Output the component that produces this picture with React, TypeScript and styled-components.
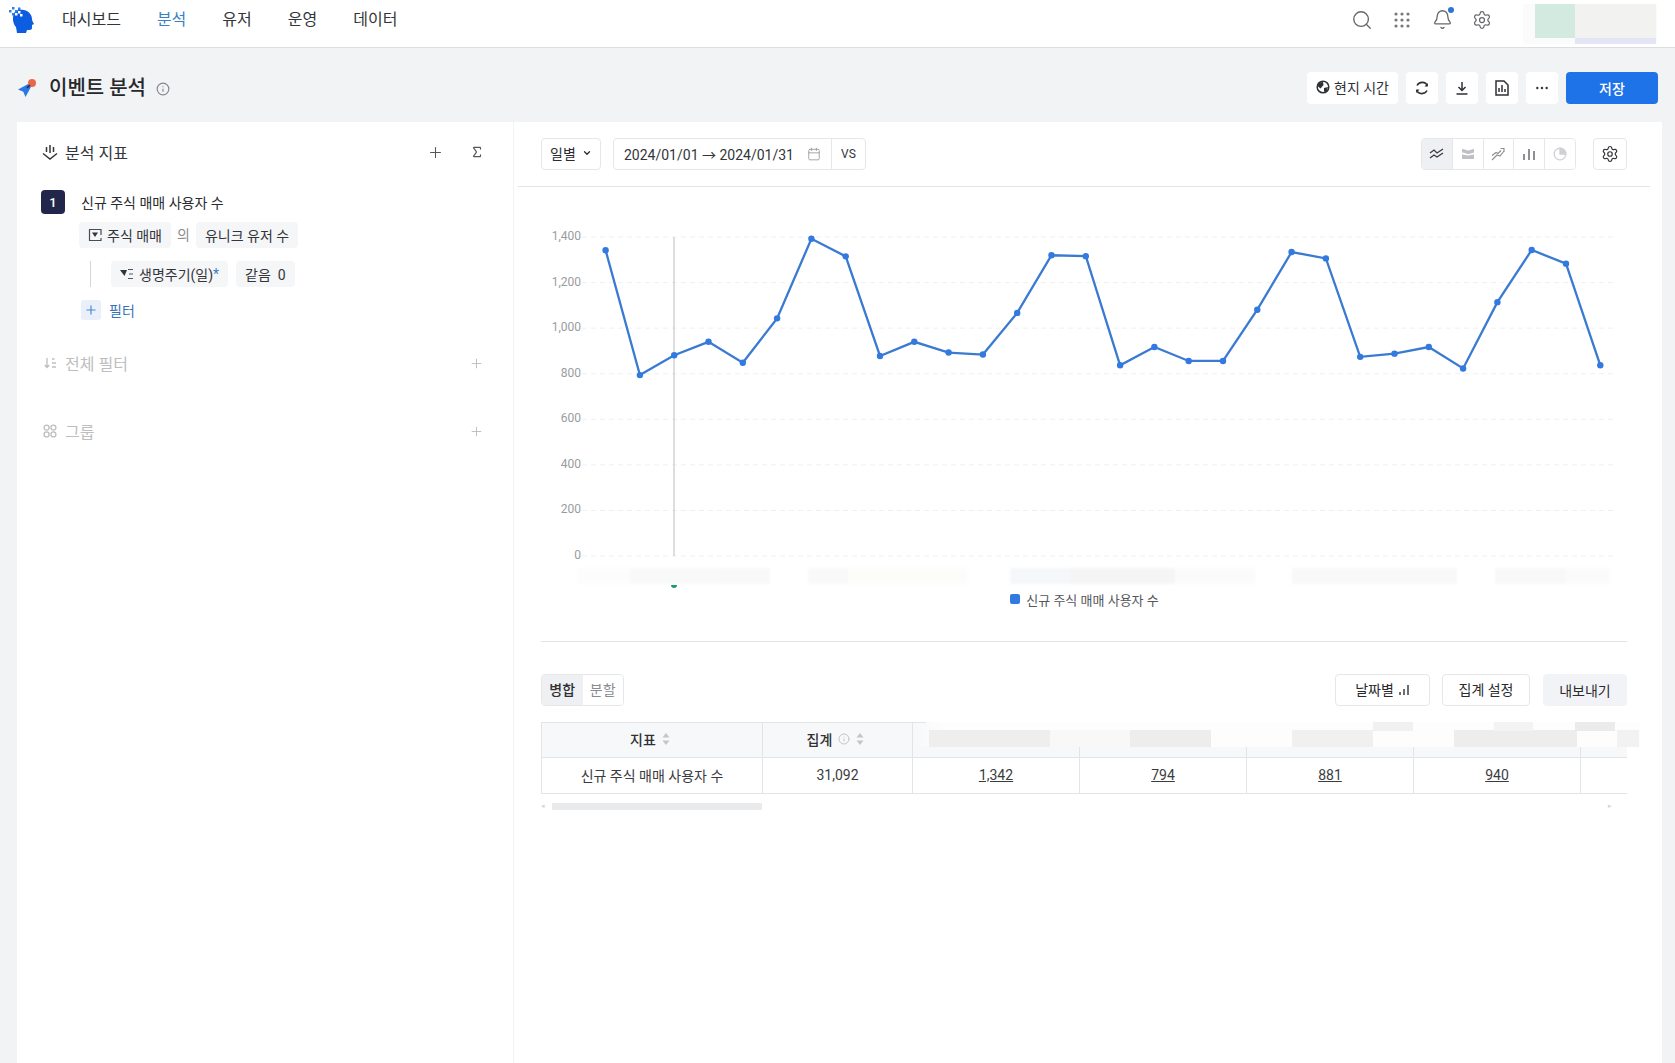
import { Fragment } from 'react'
import styled, { createGlobalStyle } from 'styled-components'
import { Bell, Calendar, ChevronDown, Ellipsis, Info, Plus, Search, Settings, Sigma } from 'lucide-react'

const GlobalStyle = createGlobalStyle`
  * {
    box-sizing: border-box;
  }

  html,
  body {
    margin: 0;
    padding: 0;
    background: #f2f3f5;
  }

  body {
    font-family: Roboto, 'Noto Sans CJK KR', sans-serif;
    font-size: 14px;
    color: #2a2b2f;
  }
`

const Page = styled.div`
  display: flex;
  flex-direction: column;
  height: 1063px;
  overflow: hidden;
`

const TopBar = styled.header`
  display: flex;
  align-items: center;
  height: 48px;
  padding: 0 18px 8px 8px;
  background: #fff;
  border-bottom: 1px solid #dddee1;
`

const Nav = styled.nav`
  display: flex;
  gap: 36px;
  margin-left: 28px;
  flex: 1;
`

const NavItem = styled.span<{ $active?: boolean }>`
  font-size: 16px;
  line-height: 22px;
  color: ${({ $active }) => ($active ? '#3a7fc4' : '#333539')};
`

const TopIcons = styled.div`
  display: flex;
  align-items: center;
  gap: 18px;
  margin-right: 30px;
  color: #66686d;
`

const TopIcon = styled.span`
  position: relative;
  display: flex;
  align-items: center;
  justify-content: center;
  width: 22px;
  height: 22px;
`

const BellDot = styled.i`
  position: absolute;
  top: -2px;
  right: -1px;
  width: 6px;
  height: 6px;
  border-radius: 50%;
  background: #2c74d6;
`

const Avatar = styled.div`
  display: grid;
  grid-template-columns: 12px 40px 81px;
  grid-template-rows: 34px 6px;
  width: 134px;
  height: 40px;
  margin-top: 8px;
  background: #fbfbfb;
`

const AvatarPart = styled.span<{ $bg: string; $row?: number; $col: number }>`
  background: ${({ $bg }) => $bg};
  grid-column: ${({ $col }) => $col};
  grid-row: ${({ $row }) => $row ?? 1};
`

const TitleRow = styled.div`
  display: flex;
  align-items: center;
  height: 74px;
  padding: 6px 17px 0 18px;
`

const PageTitle = styled.h1`
  margin: 0 0 0 13px;
  font-size: 20px;
  font-weight: 500;
  line-height: 28px;
  color: #26282c;
`

const TitleInfo = styled.span`
  display: flex;
  margin: 0 0 -1px 10px;
  color: #85878c;
  flex: 1;
`

const HeadActions = styled.div`
  display: flex;
  gap: 8px;
`

const HeadButton = styled.button<{ $wide?: boolean }>`
  display: flex;
  align-items: center;
  justify-content: center;
  gap: 4px;
  width: ${({ $wide }) => ($wide ? '91px' : '32px')};
  height: 32px;
  padding: 0 0 ${({ $wide }) => ($wide ? '3px' : '0')};
  border: 0;
  border-radius: 4px;
  background: #fff;
  font: inherit;
  color: #2f3135;
`

const SaveButton = styled(HeadButton)`
  width: 92px;
  background: #1f73e8;
  color: #fff;
  font-weight: 500;
`

const Body = styled.main`
  display: flex;
  gap: 1px;
  flex: 1;
  margin: 0 13px 0 17px;
  min-height: 0;
`

const SidePanel = styled.aside`
  width: 496px;
  padding: 19px 29px 0 24px;
  background: #fff;
`

const SideHead = styled.div<{ $muted?: boolean; $top?: number }>`
  display: flex;
  align-items: center;
  height: 22px;
  margin-top: ${({ $top }) => $top ?? 0}px;
  font-size: 16px;
  color: ${({ $muted }) => ($muted ? '#bdbec1' : '#34363a')};
`

const SideTitle = styled.span`
  margin-left: 7px;
  flex: 1;
`

const SideIcon = styled.span`
  display: flex;
  width: 17px;
  justify-content: center;
`

const HeadTools = styled.div`
  display: flex;
  align-items: center;
  gap: 26px;
  color: #55575b;
`

const MetricRow = styled.div`
  display: flex;
  align-items: center;
  gap: 16px;
  margin-top: 27px;
`

const Badge = styled.span`
  display: flex;
  align-items: center;
  justify-content: center;
  width: 24px;
  height: 24px;
  border-radius: 4px;
  background: #22264a;
  color: #fff;
  font-size: 13px;
  font-weight: 500;
`

const ChipRow = styled.div<{ $left: number; $top: number }>`
  display: flex;
  align-items: center;
  height: 26px;
  margin: ${({ $top }) => $top}px 0 0 ${({ $left }) => $left}px;
`

const Chip = styled.span<{ $gap?: number }>`
  display: flex;
  align-items: center;
  gap: 5px;
  height: 26px;
  padding: 0 9px;
  margin-right: ${({ $gap }) => $gap ?? 0}px;
  border-radius: 4px;
  background: #f5f6f8;
  color: #33353a;
  white-space: pre;
`

const Of = styled.span`
  margin: -2px 6px 0;
  color: #8a8c90;
`

const FilterLine = styled.span`
  width: 1px;
  height: 26px;
  margin-right: 20px;
  background: #d3d4d7;
`

const Star = styled.em`
  color: #3a7fc4;
  font-style: normal;
  margin-left: -5px;
`

const AddFilter = styled.div`
  display: flex;
  align-items: center;
  gap: 8px;
  margin: 13px 0 0 40px;
  color: #3a73b5;
`

const AddBox = styled.span`
  display: flex;
  align-items: center;
  justify-content: center;
  width: 20px;
  height: 20px;
  border-radius: 3px;
  background: #e9f0fa;
  color: #4a86d6;
`

const FirstMuted = styled(SideHead)`
  margin-top: 32px;
`

const MainPanel = styled.section`
  flex: 1;
  min-width: 0;
  background: #fff;
`

const Toolbar = styled.div`
  display: flex;
  align-items: center;
  height: 65px;
  margin-left: 4px;
  margin-right: 12px;
  padding: 0 23px;
  border-bottom: 1px solid #e3e4e6;
`

const Bordered = styled.div`
  display: flex;
  align-items: center;
  height: 32px;
  border: 1px solid #e6e7e9;
  border-radius: 4px;
  background: #fff;
`

const PeriodSelect = styled(Bordered)`
  width: 60px;
  padding: 0 0 2px 8px;
  gap: 6px;
  margin-right: 12px;
`

const DateField = styled(Bordered)`
  width: 253px;
  padding-left: 10px;
  color: #33353a;
`

const DateText = styled.span`
  width: 183px;
  white-space: nowrap;
`

const CalendarSlot = styled.span`
  display: flex;
  width: 24px;
  color: #8b8d91;
`

const Versus = styled.span`
  display: flex;
  align-items: center;
  justify-content: center;
  flex: 1;
  height: 100%;
  border-left: 1px solid #e6e7e9;
  font-size: 12px;
`

const Spacer = styled.div`
  flex: 1;
`

const ChartTypes = styled(Bordered)`
  width: 155px;
  margin-right: 17px;
  overflow: hidden;
`

const ChartType = styled.span<{ $active?: boolean }>`
  display: flex;
  align-items: center;
  justify-content: center;
  flex: 1;
  height: 100%;
  background: ${({ $active }) => ($active ? '#eef0f3' : '#fff')};
  border-left: 1px solid #e6e7e9;

  &:first-child {
    border-left: 0;
  }
`

const GearButton = styled(Bordered)`
  justify-content: center;
  width: 34px;
`

const ChartSvg = styled.svg`
  display: block;
  width: 1148px;
  height: 401px;
`

const AxisLabel = styled.text`
  font-size: 12px;
  fill: #9a9b9f;
  text-anchor: end;
`

const BlurGroup = styled.g`
  filter: blur(1.5px);
`

const Legend = styled.div`
  display: flex;
  align-items: center;
  justify-content: center;
  gap: 6px;
  height: 22px;
  padding-right: 7px;
  font-size: 13px;
  color: #55575b;
`

const LegendMark = styled.i`
  width: 10px;
  height: 10px;
  border-radius: 2px;
  background: #3279e0;
`

const Rule = styled.hr`
  margin: 31px 35px 0 27px;
  border: 0;
  border-top: 1px solid #e3e4e6;
`

const TableSection = styled.div`
  padding: 32px 35px 0 27px;
`

const TableBar = styled.div`
  display: flex;
  align-items: center;
  gap: 12px;
`

const ViewTabs = styled(Bordered)`
  width: 83px;
  overflow: hidden;
`

const ViewTab = styled.span<{ $active?: boolean }>`
  display: flex;
  align-items: center;
  justify-content: center;
  flex: 1;
  height: 100%;
  padding-bottom: 2px;
  background: ${({ $active }) => ($active ? '#eef0f3' : '#fff')};
  color: ${({ $active }) => ($active ? '#2f3135' : '#8a8c90')};
  font-weight: ${({ $active }) => ($active ? 500 : 400)};
`

const OutlineButton = styled(Bordered)<{ $w: number }>`
  justify-content: center;
  gap: 5px;
  width: ${({ $w }) => $w}px;
  padding-bottom: 2px;
`

const ExportButton = styled(OutlineButton)`
  margin-left: 1px;
  padding-bottom: 0;
  border-color: #f2f3f6;
  background: #f2f3f6;
`

const TableArea = styled.div`
  position: relative;
  margin-top: 16px;
`

const TableWrap = styled.div`
  width: 1086px;
  overflow: hidden;
`

const DataTable = styled.table`
  table-layout: fixed;
  border-collapse: collapse;
  width: 1156px;
`

const HeadCell = styled.th<{ $w: number }>`
  width: ${({ $w }) => $w}px;
  height: 35px;
  padding: 0 4px 2px 0;
  border: 1px solid #e3e4e6;
  background: #f7f8fa;
  font-weight: 500;
  color: #2f3135;
`

const DateHeadCell = styled(HeadCell)`
  border-top-color: transparent;
`

const HeadInner = styled.span`
  display: inline-flex;
  align-items: center;
  gap: 6px;
`

const Sorter = styled.svg`
  display: block;
`

const Cell = styled.td`
  height: 36px;
  padding: 0 0 2px;
  border: 1px solid #e3e4e6;
  text-align: center;
  color: #3a3c40;
`

const LinkValue = styled.span`
  text-decoration: underline;
`

const BlurBand = styled.div`
  position: absolute;
  top: 0;
  left: 372px;
  width: 727px;
  height: 25px;
  background: linear-gradient(90deg, #f7f8fa, #fdfdfd 30px);
`

const BlurPatch = styled.i<{ $x: number; $y: number; $w: number; $h: number; $c: string }>`
  position: absolute;
  left: ${({ $x }) => $x}px;
  top: ${({ $y }) => $y}px;
  width: ${({ $w }) => $w}px;
  height: ${({ $h }) => $h}px;
  background: ${({ $c }) => $c};
`

const ScrollTrack = styled.div`
  display: flex;
  align-items: center;
  height: 7px;
  margin-top: 9px;
  width: 1086px;
`

const ScrollThumb = styled.div`
  width: 210px;
  height: 7px;
  margin-left: 7px;
  background: #e9eaec;
`

const ScrollArrow = styled.span`
  font-size: 7px;
  line-height: 7px;
  color: #d5d6d8;
`

const ScrollEnd = styled(ScrollArrow)`
  margin-left: auto;
  margin-right: 15px;
`

// 차트 좌표는 페이지 좌표 기준
const VALUES = [
  1342, 794, 881, 940, 848, 1043, 1392, 1315, 878, 940, 893, 884, 1067, 1320, 1316, 837, 917, 856, 856, 1081, 1334,
  1306, 874, 888, 917, 823, 1114, 1343, 1283, 837,
]
const Y_TICKS = [0, 200, 400, 600, 800, 1000, 1200, 1400]
const X_START = 605.6
const X_STEP = 34.3
const yOf = (value: number) => 556 - (value * 319) / 1400
const LINE_POINTS = VALUES.map((v, i) => `${X_START + i * X_STEP},${yOf(v)}`).join(' ')

const AXIS_BLUR = [
  { x: 578, w: 100, c: '#fcfcfc' },
  { x: 630, w: 100, c: '#f9f9fa' },
  { x: 720, w: 50, c: '#f8f8f9' },
  { x: 808, w: 40, c: '#f9f9fa' },
  { x: 848, w: 120, c: '#fcfcfa' },
  { x: 1010, w: 60, c: '#f6f7fb' },
  { x: 1070, w: 105, c: '#f5f5f6' },
  { x: 1175, w: 80, c: '#fbfbfc' },
  { x: 1292, w: 165, c: '#f8f8f9' },
  { x: 1495, w: 70, c: '#f8f8f9' },
  { x: 1565, w: 45, c: '#fbfbfb' },
]

const HEAD_BLUR = [
  { x: 0, y: 0, w: 13, h: 1, c: '#e3e4e6' },
  { x: 16, y: 8, w: 121, h: 17, c: '#eeeeef' },
  { x: 137, y: 8, w: 80, h: 17, c: '#f8f8f9' },
  { x: 217, y: 8, w: 81, h: 17, c: '#ededee' },
  { x: 379, y: 8, w: 81, h: 17, c: '#f0f0f1' },
  { x: 460, y: 0, w: 40, h: 9, c: '#f1f1f2' },
  { x: 541, y: 8, w: 123, h: 17, c: '#ededee' },
  { x: 581, y: 0, w: 39, h: 9, c: '#f3f3f4' },
  { x: 662, y: 0, w: 40, h: 9, c: '#ebebec' },
  { x: 704, y: 8, w: 22, h: 17, c: '#f2f2f3' },
]

const DAY_VALUES = ['1,342', '794', '881', '940', '']

const SortIcon = () => (
  <Sorter width="8" height="14" viewBox="0 0 8 14" fill="#c4c5c8">
    <path d="M4 1 7.500 5.500H.5zM4 13 .5 8.500h7z" />
  </Sorter>
)

const Logo = () => (
  <svg width="26" height="27" viewBox="0 0 26 27" fill="#0d5de0">
    <path d="M6 7c2-3 6-4 10-3 5 1 8 5 8 9 0 2 1 3 2 5l-2 1v3c0 2-2 2-5 2l-1 3h-9l-1-6c-3-3-4-9-2-14z" />
    <g fill="#2f7fe8">
      <rect x="1" y="4" width="2.500" height="2.500" />
      <rect x="4" y="1" width="2.500" height="2.500" />
      <rect x="4" y="7" width="2.500" height="2.500" />
      <rect x="7" y="4" width="2.500" height="2.500" />
      <rect x="10" y="1.500" width="2.500" height="2.500" />
    </g>
    <g fill="#fff">
      <rect x="7" y="7" width="2.500" height="2.500" />
      <rect x="10" y="5" width="2.500" height="2.500" />
      <rect x="12" y="8" width="2.500" height="2.500" />
    </g>
  </svg>
)

const GridDots = () => (
  <svg width="18" height="18" viewBox="0 0 18 18" fill="#77797d">
    {[3, 9, 15].flatMap((cy) =>
      [3, 9, 15].map((cx) => <circle key={`${cx}-${cy}`} cx={cx} cy={cy} r="1.600" />)
    )}
  </svg>
)

const TitleIcon = () => (
  <svg width="18" height="18" viewBox="0 0 18 18">
    <path d="M0 10.500 12 4l2 2-6.500 12-2.200-5.300z" fill="#2a78e4" />
    <circle cx="14" cy="4" r="4" fill="#e8694a" />
    <path d="m9 9 3-3" stroke="#23284a" strokeWidth="1.400" />
  </svg>
)

const RefreshIcon = () => (
  <svg width="16" height="16" viewBox="0 0 16 16" fill="none" stroke="#2f3135" strokeWidth="1.600">
    <path d="M3 5.500A5.800 5.800 0 0 1 13.500 6M13 10.500A5.800 5.800 0 0 1 2.500 10" />
    <path d="M13.800 3v3.500h-3.300zM2.200 13v-3.500h3.300z" fill="#2f3135" stroke="none" />
  </svg>
)

const SaveDownIcon = () => (
  <svg width="14" height="14" viewBox="0 0 14 14" fill="none" stroke="#2f3135" strokeWidth="1.500">
    <path d="M7 1v8M3.500 6 7 9.500 10.500 6M1.500 13h11" />
  </svg>
)

const MetricIcon = ({ color = '#34363a' }: { color?: string }) => (
  <svg width="16" height="16" viewBox="0 0 16 16" fill="none" stroke={color} strokeWidth="1.500">
    <path d="M8 1v8M4.500 3v5M11.500 3v5M1 9.500 8 15l7-5.500" />
  </svg>
)

const GlobalFilterIcon = () => (
  <svg width="14" height="14" viewBox="0 0 14 14" fill="none" stroke="#bdbec1" strokeWidth="1.300">
    <path d="M4 2v9M1.800 9 4 11.500 6.200 9M9 3h2.500M9 7h4M9 11h4" />
  </svg>
)

const GroupIcon = () => (
  <svg width="14" height="14" viewBox="0 0 14 14" fill="none" stroke="#bdbec1" strokeWidth="1.300">
    <circle cx="3.600" cy="3.600" r="2.500" />
    <circle cx="10.400" cy="3.600" r="2.500" />
    <circle cx="3.600" cy="10.400" r="2.500" />
    <circle cx="10.400" cy="10.400" r="2.500" />
  </svg>
)

const EventIcon = () => (
  <svg width="14" height="14" viewBox="0 0 14 14" fill="none" stroke="#4a4c50" strokeWidth="1.200">
    <path d="M13 7V1.500H1.500v11H13V10" />
    <path d="M4 4.500h6L7 9z" fill="#33353a" stroke="none" />
  </svg>
)

const PropertyIcon = () => (
  <svg width="14" height="12" viewBox="0 0 14 12" fill="none">
    <path d="M0 2h7L4.500 8z" fill="#33353a" />
    <path d="M8 1.500h5M9 6h4M8 10.500h5" stroke="#55575b" strokeWidth="1.200" />
  </svg>
)

const ReportIcon = () => (
  <svg width="14" height="16" viewBox="0 0 14 16" fill="none" stroke="#2f3135" strokeWidth="1.500">
    <path d="M1 1h8l4 4v10H1z" />
    <path d="M4 12V8M7 12V5M10 12V9" />
  </svg>
)

const GlobeIcon = () => (
  <svg width="14" height="14" viewBox="0 0 14 14">
    <circle cx="7" cy="7" r="5.800" fill="#fff" stroke="#2f3135" strokeWidth="1.500" />
    <path d="M3 2.500 7 2l.5 3-3 3.500-3-2.500zM8 8l4-1-1.500 5L8 11.500z" fill="#2f3135" />
  </svg>
)

const LineTypeIcon = () => (
  <svg width="16" height="14" viewBox="0 0 16 14" fill="none" stroke="#3a3c40" strokeWidth="1.300">
    <path d="m1 6 4-3 3 3 6-4M1 11l4-3 3 2 6-4" />
  </svg>
)

const AreaTypeIcon = () => (
  <svg width="16" height="14" viewBox="0 0 16 14" fill="#bfc0c3">
    <path d="M2 2c3 0 4 1.500 6 1.500S12 2 14 2v3.500c-2 .5-4 1.500-6 1.500S5 5.500 2 5.500zM2 7.500c3 0 4 1 6 1s4-1 6-1V12H2z" />
  </svg>
)

const TrendTypeIcon = () => (
  <svg width="16" height="14" viewBox="0 0 16 14" fill="none" stroke="#8f9094" strokeWidth="1.200">
    <path d="m2 13 5-5 3 1 4-5M10.500 1.500H14V5M2 8.500l4-3 2 1 3-3" />
  </svg>
)

const BarTypeIcon = () => (
  <svg width="14" height="14" viewBox="0 0 14 14" fill="#8f9094">
    <rect x="1" y="7" width="2" height="6" />
    <rect x="6" y="2" width="2" height="11" />
    <rect x="11" y="4" width="2" height="9" />
  </svg>
)

const PieTypeIcon = () => (
  <svg width="14" height="14" viewBox="0 0 14 14" fill="none" stroke="#cfd0d3" strokeWidth="1.300">
    <circle cx="7" cy="7" r="5.800" />
    <path d="M7 1.200V7h5.800A5.800 5.800 0 0 0 7 1.200z" fill="#cfd0d3" />
  </svg>
)

const MiniBars = () => (
  <svg width="11" height="11" viewBox="0 0 11 11" fill="#6c6e72">
    <rect x="0" y="8" width="2" height="3" />
    <rect x="4" y="5" width="2" height="6" />
    <rect x="8" y="1" width="2" height="10" />
  </svg>
)

export default function App() {
  return (
    <Page>
      <GlobalStyle />

      <TopBar>
        <Logo />
        <Nav>
          <NavItem>대시보드</NavItem>
          <NavItem $active>분석</NavItem>
          <NavItem>유저</NavItem>
          <NavItem>운영</NavItem>
          <NavItem>데이터</NavItem>
        </Nav>
        <TopIcons>
          <TopIcon>
            <Search size={22} strokeWidth={1.5} />
          </TopIcon>
          <TopIcon>
            <GridDots />
          </TopIcon>
          <TopIcon>
            <Bell size={21} strokeWidth={1.5} />
            <BellDot />
          </TopIcon>
          <TopIcon>
            <Settings size={20} strokeWidth={1.5} />
          </TopIcon>
        </TopIcons>
        <Avatar>
          <AvatarPart $col={2} $bg="#d3eae1" />
          <AvatarPart $col={3} $bg="#f2f2f1" />
          <AvatarPart $col={3} $row={2} $bg="#e4e5f4" />
        </Avatar>
      </TopBar>

      <TitleRow>
        <TitleIcon />
        <PageTitle>이벤트 분석</PageTitle>
        <TitleInfo>
          <Info size={14} />
        </TitleInfo>
        <HeadActions>
          <HeadButton $wide>
            <GlobeIcon />
            현지 시간
          </HeadButton>
          <HeadButton>
            <RefreshIcon />
          </HeadButton>
          <HeadButton>
            <SaveDownIcon />
          </HeadButton>
          <HeadButton>
            <ReportIcon />
          </HeadButton>
          <HeadButton>
            <Ellipsis size={16} strokeWidth={1.6} />
          </HeadButton>
          <SaveButton>저장</SaveButton>
        </HeadActions>
      </TitleRow>

      <Body>
        <SidePanel>
          <SideHead>
            <SideIcon>
              <MetricIcon />
            </SideIcon>
            <SideTitle>분석 지표</SideTitle>
            <HeadTools>
              <Plus size={17} strokeWidth={1.5} />
              <Sigma size={14} strokeWidth={2} />
            </HeadTools>
          </SideHead>
          <MetricRow>
            <Badge>1</Badge>
            신규 주식 매매 사용자 수
          </MetricRow>
          <ChipRow $left={38} $top={8}>
            <Chip>
              <EventIcon />
              주식 매매
            </Chip>
            <Of>의</Of>
            <Chip>유니크 유저 수</Chip>
          </ChipRow>
          <ChipRow $left={49} $top={13}>
            <FilterLine />
            <Chip $gap={8}>
              <PropertyIcon />
              생명주기(일)
              <Star>*</Star>
            </Chip>
            <Chip>같음  0</Chip>
          </ChipRow>
          <AddFilter>
            <AddBox>
              <Plus size={14} />
            </AddBox>
            필터
          </AddFilter>
          <FirstMuted $muted>
            <SideIcon>
              <GlobalFilterIcon />
            </SideIcon>
            <SideTitle>전체 필터</SideTitle>
            <Plus size={15} strokeWidth={1.5} />
          </FirstMuted>
          <SideHead $muted $top={46}>
            <SideIcon>
              <GroupIcon />
            </SideIcon>
            <SideTitle>그룹</SideTitle>
            <Plus size={15} strokeWidth={1.5} />
          </SideHead>
        </SidePanel>

        <MainPanel>
          <Toolbar>
            <PeriodSelect>
              일별
              <ChevronDown size={10} strokeWidth={3} />
            </PeriodSelect>
            <DateField>
              <DateText>2024/01/01 → 2024/01/31</DateText>
              <CalendarSlot>
                <Calendar size={14} strokeWidth={1.3} />
              </CalendarSlot>
              <Versus>VS</Versus>
            </DateField>
            <Spacer />
            <ChartTypes>
              <ChartType $active>
                <LineTypeIcon />
              </ChartType>
              <ChartType>
                <AreaTypeIcon />
              </ChartType>
              <ChartType>
                <TrendTypeIcon />
              </ChartType>
              <ChartType>
                <BarTypeIcon />
              </ChartType>
              <ChartType>
                <PieTypeIcon />
              </ChartType>
            </ChartTypes>
            <GearButton>
              <Settings size={18} strokeWidth={1.6} color="#34363a" />
            </GearButton>
          </Toolbar>

          <ChartSvg viewBox="514 187 1148 401">
            {Y_TICKS.map((tick) => (
              <Fragment key={tick}>
                <line x1="582" x2="1617" y1={yOf(tick)} y2={yOf(tick)} stroke="#f0f0f2" strokeDasharray="5 4" />
                <AxisLabel x="581" y={yOf(tick) + 3}>
                  {tick.toLocaleString('en-US')}
                </AxisLabel>
              </Fragment>
            ))}
            <line x1="674" x2="674" y1="237" y2="556" stroke="#bcbdc0" />
            <BlurGroup>
              {AXIS_BLUR.map((b) => (
                <rect key={b.x} x={b.x} y="568" width={b.w} height="16" fill={b.c} />
              ))}
            </BlurGroup>
            <path d="M671 585a3 3 0 0 0 6 0z" fill="#1f9a72" />
            <polyline points={LINE_POINTS} fill="none" stroke="#3a7ad2" strokeWidth="2.300" />
            {VALUES.map((v, i) => (
              <circle key={i} cx={X_START + i * X_STEP} cy={yOf(v)} r="3.200" fill="#3279e0" />
            ))}
          </ChartSvg>
          <Legend>
            <LegendMark />
            신규 주식 매매 사용자 수
          </Legend>
          <Rule />

          <TableSection>
            <TableBar>
              <ViewTabs>
                <ViewTab $active>병합</ViewTab>
                <ViewTab>분할</ViewTab>
              </ViewTabs>
              <Spacer />
              <OutlineButton $w={95}>
                날짜별
                <MiniBars />
              </OutlineButton>
              <OutlineButton $w={88}>집계 설정</OutlineButton>
              <ExportButton $w={84}>내보내기</ExportButton>
            </TableBar>
            <TableArea>
              <TableWrap>
                <DataTable>
                  <thead>
                    <tr>
                      <HeadCell $w={221}>
                        <HeadInner>
                          지표
                          <SortIcon />
                        </HeadInner>
                      </HeadCell>
                      <HeadCell $w={150}>
                        <HeadInner>
                          집계
                          <Info size={12} color="#c4c5c8" />
                          <SortIcon />
                        </HeadInner>
                      </HeadCell>
                      {DAY_VALUES.map((_, i) => (
                        <DateHeadCell key={i} $w={167} />
                      ))}
                    </tr>
                  </thead>
                  <tbody>
                    <tr>
                      <Cell>신규 주식 매매 사용자 수</Cell>
                      <Cell>31,092</Cell>
                      {DAY_VALUES.map((v, i) => (
                        <Cell key={i}>
                          <LinkValue>{v}</LinkValue>
                        </Cell>
                      ))}
                    </tr>
                  </tbody>
                </DataTable>
              </TableWrap>
              <BlurBand>
                {HEAD_BLUR.map((b) => (
                  <BlurPatch key={`${b.x}-${b.y}`} $x={b.x} $y={b.y} $w={b.w} $h={b.h} $c={b.c} />
                ))}
              </BlurBand>
            </TableArea>
            <ScrollTrack>
              <ScrollArrow>◂</ScrollArrow>
              <ScrollThumb />
              <ScrollEnd>▸</ScrollEnd>
            </ScrollTrack>
          </TableSection>
        </MainPanel>
      </Body>
    </Page>
  )
}
